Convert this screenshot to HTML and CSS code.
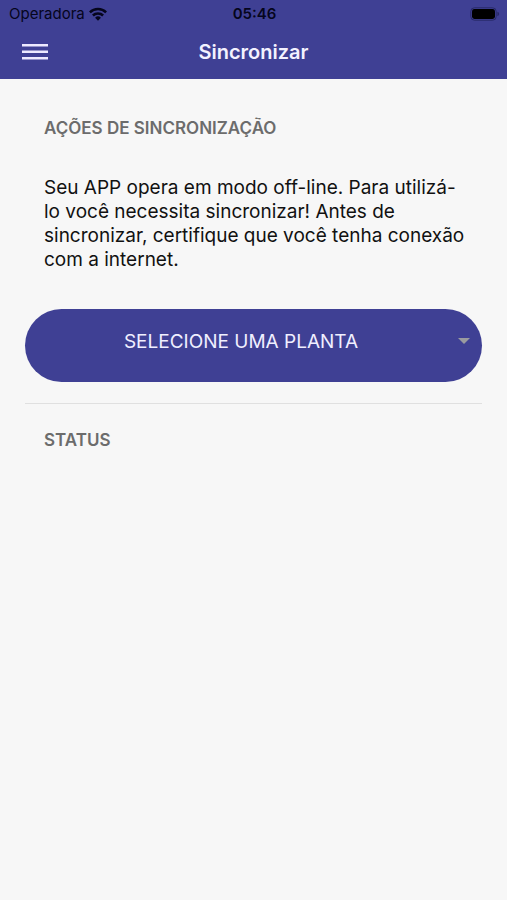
FILE: index.html
```html
<!DOCTYPE html>
<html lang="pt-BR">
<head>
  <meta charset="UTF-8" />
  <meta name="viewport" content="width=device-width, initial-scale=1.0" />
  <title>Sincronizar</title>
  <link rel="stylesheet" href="styles.css">
</head>
<body>
  <header class="header">
    <div class="status-bar">
      <div class="carrier">
        <span>Operadora</span>
        <svg width="18" height="14" viewBox="0 0 18 14" fill="none" stroke="#05051c" stroke-width="2.5">
          <path d="M0.9 5.3a11.5 11.5 0 0 1 16.2 0" />
          <path d="M3.9 8.5a7.2 7.2 0 0 1 10.2 0" />
          <path d="M9 13.8L6.1 10.8a4.1 4.1 0 0 1 5.8 0z" fill="#05051c" stroke="none" />
        </svg>
      </div>
      <span class="time">05:46</span>
      <div class="battery">
        <svg width="30" height="14" viewBox="0 0 30 14">
          <rect x="0.8" y="0.8" width="25.4" height="12.4" rx="3.6" fill="none" stroke="#282968" stroke-width="1" />
          <rect x="2" y="2" width="23" height="10" rx="2.4" fill="#000" />
          <path d="M27.4 4.8q1.8 0.6 1.8 2.2t-1.8 2.2z" fill="#282968" />
        </svg>
      </div>
    </div>
    <div class="toolbar">
      <button type="button" class="menu-button" aria-label="Menu">
        <svg width="26" height="18" viewBox="0 0 26 18" stroke="#edeaff" stroke-width="2.4">
          <path d="M0 2.2h26M0 8.7h26M0 15.2h26" />
        </svg>
      </button>
      <h1>Sincronizar</h1>
    </div>
  </header>

  <main class="content">
    <section class="actions">
      <h2>AÇÕES DE SINCRONIZAÇÃO</h2>
      <p>Seu APP opera em modo off-line. Para utilizá-lo você necessita sincronizar! Antes de sincronizar, certifique que você tenha conexão com a internet.</p>
      <div class="select-box">
        <select id="planta" aria-label="Selecione uma planta">
          <option>SELECIONE UMA PLANTA</option>
        </select>
        <span class="arrow"></span>
      </div>
    </section>

    <section class="status">
      <h2>STATUS</h2>
    </section>
  </main>
</body>
</html>
```

FILE: styles.css
```css
* {
  box-sizing: border-box;
}
body {
  margin: 0;
  min-height: 100vh;
  font-family: Inter, "Liberation Sans", sans-serif;
  background-color: #f7f7f7;
  color: #111;
}
svg {
  display: block;
}
.header {
  background-color: #3f4094;
  padding-bottom: 7px;
}
.status-bar {
  display: grid;
  grid-template-columns: 1fr auto 1fr;
  align-items: center;
  height: 27px;
  padding: 0 7px 0 9px;
  font-size: 15px;
  color: #05051c;
}
.carrier {
  display: flex;
  align-items: center;
  gap: 4px;
}
.time {
  font-weight: 600;
}
.battery {
  justify-self: end;
}
.toolbar {
  display: grid;
  grid-template-columns: 1fr auto 1fr;
  align-items: center;
  height: 45px;
  padding: 4px 22px 0;
}
.toolbar h1 {
  margin: 0;
  font-size: 20px;
  font-weight: 600;
  line-height: 24px;
  color: #f3f2ff;
}
.menu-button {
  justify-self: start;
  padding: 0;
  border: none;
  background: none;
  cursor: pointer;
}
.content {
  padding: 0 25px;
}
.content h2 {
  margin: 0;
  padding: 0 19px;
  font-size: 17px;
  font-weight: 600;
  line-height: 20px;
  color: #6c6c6c;
}
.actions {
  padding: 39px 0 21px;
  border-bottom: 1px solid #e0e0e0;
}
.actions p {
  margin: 38px 0 37px;
  padding: 0 14px 0 19px;
  font-size: 19px;
  line-height: 24px;
}
.select-box {
  position: relative;
}
.select-box select {
  appearance: none;
  display: block;
  width: 100%;
  height: 73px;
  padding: 0 50px 8px 25px;
  border: none;
  border-radius: 37px;
  background-color: #3f4094;
  color: #f0efff;
  font-family: inherit;
  font-size: 19px;
  text-align: center;
  text-align-last: center;
}
.arrow {
  position: absolute;
  top: 29px;
  right: 12px;
  border: 6px solid transparent;
  border-top-color: #9a9b9f;
  pointer-events: none;
}
.status {
  padding: 26px 0;
}
```
